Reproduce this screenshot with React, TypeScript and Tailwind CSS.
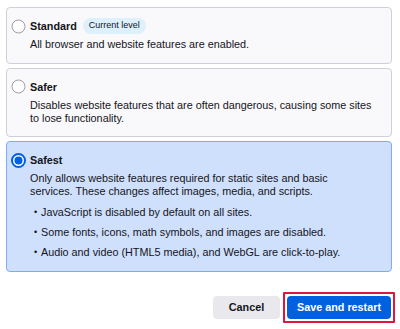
import React, { useState } from 'react'

type Level = 'standard' | 'safer' | 'safest'

interface LevelOption {
    id: Level
    title: string
    description: string
    current?: boolean
    bullets?: string[]
}

// descriptions keep the line breaks of the dialog
const levels: LevelOption[] = [
    {
        id: 'standard',
        title: 'Standard',
        description: 'All browser and website features are enabled.',
        current: true,
    },
    {
        id: 'safer',
        title: 'Safer',
        description: 'Disables website features that are often dangerous, causing some sites\nto lose functionality.',
    },
    {
        id: 'safest',
        title: 'Safest',
        description:
            'Only allows website features required for static sites and basic\nservices. These changes affect images, media, and scripts.',
        bullets: [
            'JavaScript is disabled by default on all sites.',
            'Some fonts, icons, math symbols, and images are disabled.',
            'Audio and video (HTML5 media), and WebGL are click-to-play.',
        ],
    },
]

const Radio: React.FC<{ checked: boolean }> = ({ checked }) => (
    <svg width="15" height="15" viewBox="0 0 15 15" className="shrink-0">
        {checked ? (
            <>
                <circle cx="7.5" cy="7.5" r="6.5" fill="#ffffff" stroke="#0061e0" strokeWidth="2" />
                <circle cx="7.5" cy="7.5" r="4" fill="#0061e0" />
            </>
        ) : (
            <circle cx="7.5" cy="7.5" r="6.5" fill="#ffffff" stroke="#9e9ea8" strokeWidth="1" />
        )}
    </svg>
)

const App: React.FC = () => {
    const [selected, setSelected] = useState<Level>('safest')

    return (
        <div
            className="w-[400px] h-[329px] bg-white pl-[6px] pr-[8px] pt-[7px] text-[#15141a]"
            style={{ fontFamily: '"Liberation Sans", Arial, sans-serif' }}
        >
            <div className="flex flex-col gap-[4px]">
                {levels.map((level) => {
                    const isSelected = selected === level.id
                    return (
                        <div
                            key={level.id}
                            onClick={() => setSelected(level.id)}
                            className={`flex gap-[4px] rounded-[4px] border pl-[4px] pr-[6px] pt-[10px] pb-[12px] ${
                                isSelected ? 'bg-[#cfe0fc] border-[#7fabf5]' : 'bg-[#f9f9fb] border-[#cfcfd8]'
                            }`}
                        >
                            <div className="h-[16px] flex items-center">
                                <Radio checked={isSelected} />
                            </div>
                            <div className="flex-1">
                                <div className="flex items-center gap-[6px] h-[16px]">
                                    <span className="text-[10.8px] font-bold">{level.title}</span>
                                    {level.current && (
                                        <span className="rounded-full bg-[#dcf1fc] px-[6px] h-[16px] flex items-center text-[9px]">
                                            Current level
                                        </span>
                                    )}
                                </div>
                                <p className="mt-[4px] whitespace-pre-line text-[10.8px] leading-[12.8px]">
                                    {level.description}
                                </p>
                                {level.bullets && (
                                    <ul className="mt-[8px] flex flex-col gap-[7px]">
                                        {level.bullets.map((b) => (
                                            <li key={b} className="flex text-[10.8px] leading-[13px]">
                                                <span className="w-[11px] pl-[4px] text-[9px]">•</span>
                                                <span>{b}</span>
                                            </li>
                                        ))}
                                    </ul>
                                )}
                            </div>
                        </div>
                    )
                })}
            </div>

            <div className="mt-[24px] flex justify-end gap-[3px] pr-[1px]">
                <button className="h-[23px] w-[67px] rounded-[4px] bg-[#e9e9ed] text-[10.8px] font-bold text-[#15141a]">
                    Cancel
                </button>
                <div className="-my-[4px] -mr-[4px] rounded-[1px] border-2 border-[#e0143c] p-[2px]">
                    <button className="block h-[23px] w-[104px] rounded-[4px] bg-[#0061e0] text-[10.8px] font-bold text-white">
                        Save and restart
                    </button>
                </div>
            </div>
        </div>
    )
}

export default App
